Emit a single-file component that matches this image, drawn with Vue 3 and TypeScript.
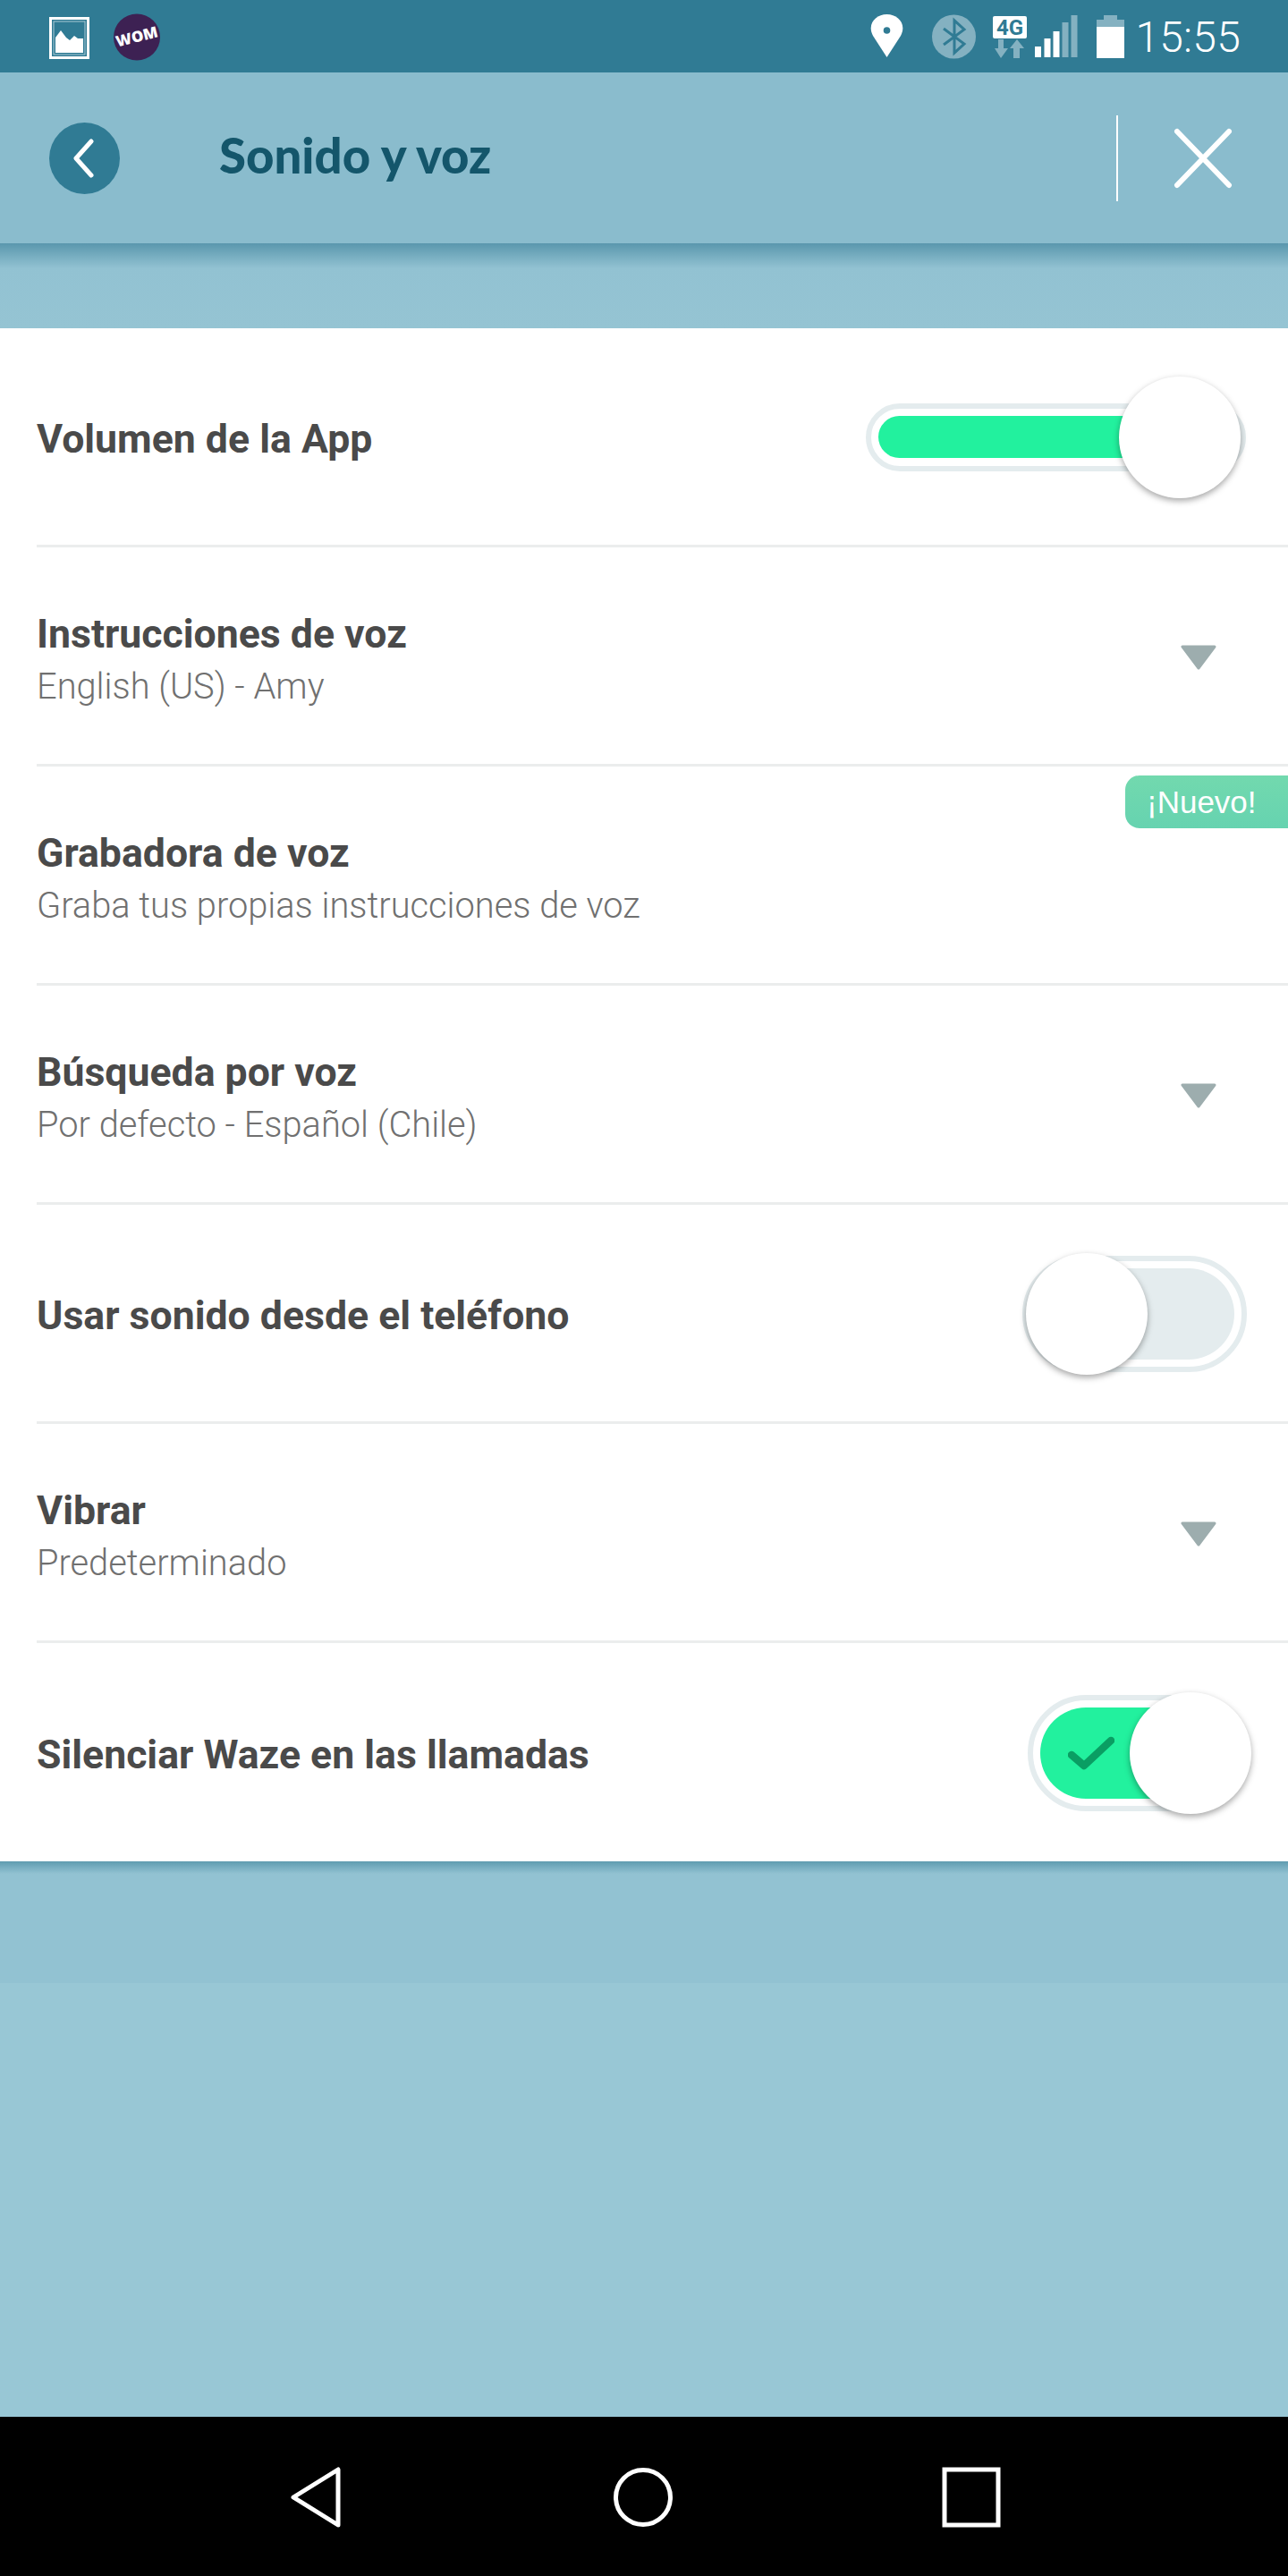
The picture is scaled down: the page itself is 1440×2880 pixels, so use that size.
<script setup lang="ts">
interface SettingRow {
  title: string;
  subtitle?: string;
  control: 'slider' | 'select' | 'badge' | 'toggle-off' | 'toggle-on';
}

const rows: SettingRow[] = [
  { title: 'Volumen de la App', control: 'slider' },
  { title: 'Instrucciones de voz', subtitle: 'English (US) - Amy', control: 'select' },
  { title: 'Grabadora de voz', subtitle: 'Graba tus propias instrucciones de voz', control: 'badge' },
  { title: 'Búsqueda por voz', subtitle: 'Por defecto - Español (Chile)', control: 'select' },
  { title: 'Usar sonido desde el teléfono', control: 'toggle-off' },
  { title: 'Vibrar', subtitle: 'Predeterminado', control: 'select' },
  { title: 'Silenciar Waze en las llamadas', control: 'toggle-on' },
];

const signalBars = [
  { x: 0, y: 35, h: 12, on: true },
  { x: 10.5, y: 26, h: 21, on: true },
  { x: 20.5, y: 18, h: 29, on: true },
  { x: 30.5, y: 8, h: 39, on: false },
  { x: 40.5, y: 0, h: 47, on: false },
];
</script>

<template>
  <div class="screen">
    <div class="status-bar">
      <div class="status-left">
        <svg class="ic-picture" width="45" height="47" viewBox="0 0 45 47">
          <rect x="1.5" y="1.5" width="42" height="44" fill="none" stroke="#fff" stroke-width="3" />
          <rect x="5" y="5" width="35" height="37" fill="none" stroke="#a9cbd6" stroke-width="1" />
          <path d="M7 40V23L13 15L19 23L23 26L28 21L32 24L38 24V40Z" fill="#fff" />
        </svg>
        <svg class="ic-wom" width="52" height="53" viewBox="0 0 52 53">
          <circle cx="26" cy="26.500" r="26" fill="#3d2153" />
          <text x="26" y="32" text-anchor="middle" transform="rotate(-14 26 26)" class="wom-text">WOM</text>
        </svg>
      </div>
      <div class="status-right">
        <svg class="ic-pin" width="37" height="48" viewBox="0 0 37 48">
          <path d="M18.500 48L3 24C-4 11 6 0 18.500 0S41 11 34 24Z" fill="#fff" />
          <circle cx="18.500" cy="18" r="3.800" fill="#307b94" />
        </svg>
        <svg class="ic-bt" width="49" height="50" viewBox="0 0 49 50">
          <circle cx="24.500" cy="25" r="24.500" fill="#84b1c1" />
          <path d="M13 16L36 33L25 43V7L36 17L13 34" fill="none" stroke="#307b94" stroke-width="3" />
        </svg>
        <svg class="ic-net" width="38" height="47" viewBox="0 0 38 47">
          <rect width="38" height="25" rx="2" fill="#fff" />
          <text x="19" y="21" text-anchor="middle" class="net-text">4G</text>
          <path d="M6 26H12V36H17L9 47L2 36H6Z" fill="#84b1c1" />
          <path d="M23 47V36H19L27 26L35 36H30V47Z" fill="#84b1c1" />
        </svg>
        <svg class="ic-signal" width="48" height="47" viewBox="0 0 48 47">
          <rect
            v-for="bar in signalBars"
            :key="bar.x"
            :x="bar.x"
            :y="bar.y"
            width="7"
            :height="bar.h"
            :fill="bar.on ? '#fff' : '#84b1c1'"
          />
        </svg>
        <svg class="ic-battery" width="31" height="48" viewBox="0 0 31 48">
          <path d="M8 0H23V5H31V13H0V5H8Z" fill="#84b1c1" />
          <rect y="13" width="31" height="35" fill="#fff" />
        </svg>
        <span class="clock">15:55</span>
      </div>
    </div>

    <header class="app-header">
      <button class="back-btn" type="button">
        <svg width="24" height="44" viewBox="0 0 24 44">
          <path d="M21 3L4 22L21 41" fill="none" stroke="#fff" stroke-width="5" stroke-linecap="round" stroke-linejoin="round" />
        </svg>
      </button>
      <h1 class="page-title">Sonido y voz</h1>
      <div class="header-sep"></div>
      <button class="close-btn" type="button">
        <svg width="66" height="68" viewBox="0 0 66 68">
          <path d="M4 4L62 64M62 4L4 64" fill="none" stroke="#fff" stroke-width="6" stroke-linecap="round" />
        </svg>
      </button>
    </header>

    <div class="top-gap"></div>

    <section class="settings">
      <div v-for="row in rows" :key="row.title" class="row">
        <div class="row-text" :class="{ 'has-subtitle': row.subtitle }">
          <div class="row-title">{{ row.title }}</div>
          <div v-if="row.subtitle" class="row-subtitle">{{ row.subtitle }}</div>
        </div>

        <div v-if="row.control === 'slider'" class="slider">
          <div class="slider-fill"></div>
          <div class="knob slider-knob"></div>
        </div>

        <svg v-else-if="row.control === 'select'" class="caret" width="40" height="28" viewBox="0 0 40 28">
          <path d="M2 2H38L20 26Z" fill="#9dadae" stroke="#9dadae" stroke-width="3" stroke-linejoin="round" />
        </svg>

        <div v-else-if="row.control === 'badge'" class="badge">¡Nuevo!</div>

        <div v-else-if="row.control === 'toggle-off'" class="toggle toggle-off">
          <div class="toggle-fill"></div>
          <div class="knob toggle-knob"></div>
        </div>

        <div v-else class="toggle toggle-on">
          <div class="toggle-fill">
            <svg width="52" height="42" viewBox="0 0 52 42">
              <path d="M4 23L18 35L48 7" fill="none" stroke="#0a9e63" stroke-width="8.500" stroke-linecap="round" stroke-linejoin="round" />
            </svg>
          </div>
          <div class="knob toggle-knob"></div>
        </div>
      </div>
    </section>

    <div class="bottom-band"></div>
    <div class="filler"></div>

    <nav class="nav-bar">
      <svg width="56" height="68" viewBox="0 0 56 68">
        <path d="M53 3V65L3 34Z" fill="none" stroke="#fff" stroke-width="5" stroke-linejoin="round" />
      </svg>
      <svg class="nav-home" width="66" height="68" viewBox="0 0 66 68">
        <circle cx="33" cy="34" r="30.500" fill="none" stroke="#fff" stroke-width="5" />
      </svg>
      <svg class="nav-recent" width="66" height="68" viewBox="0 0 66 68">
        <rect x="3" y="3" width="60" height="62" fill="none" stroke="#fff" stroke-width="5" />
      </svg>
    </nav>
  </div>
</template>

<style scoped>
.screen {
  width: 1440px;
  height: 2880px;
  display: flex;
  flex-direction: column;
  background: #98c7d5;
  font-family: Roboto, 'Liberation Sans', sans-serif;
  overflow: hidden;
}

.status-bar {
  height: 81px;
  flex: none;
  display: flex;
  justify-content: space-between;
  align-items: flex-start;
  background: #307b94;
  padding: 16px 53px 0 55px;
  box-sizing: border-box;
}

.status-left,
.status-right {
  display: flex;
  align-items: flex-start;
}

.ic-picture {
  margin-top: 3px;
}

.ic-wom {
  margin-left: 27px;
  margin-top: -1px;
}

.wom-text {
  font-family: 'Open Sans', sans-serif;
  font-size: 17px;
  font-weight: 800;
  fill: #fff;
}

.ic-bt {
  margin-left: 32px;
}

.ic-net {
  margin-left: 19px;
  margin-top: 2px;
}

.net-text {
  font-family: Roboto, sans-serif;
  font-size: 24px;
  font-weight: 700;
  fill: #307b94;
}

.ic-signal {
  margin-left: 9px;
  margin-top: 1px;
}

.ic-battery {
  margin-left: 21px;
  margin-top: 1px;
}

.clock {
  margin-left: 12px;
  color: #fff;
  font-size: 48px;
  font-weight: 300;
  line-height: 52px;
  letter-spacing: 0.2px;
}

.app-header {
  height: 191px;
  flex: none;
  display: flex;
  align-items: center;
  background: #8abccd;
  padding: 0 62px 0 55px;
  box-sizing: border-box;
}

.back-btn {
  width: 79px;
  height: 80px;
  flex: none;
  border: none;
  padding: 0 4px 0 0;
  border-radius: 50%;
  background: #307b94;
  display: flex;
  align-items: center;
  justify-content: center;
}

.page-title {
  margin: -8px 0 0 111px;
  flex: 1;
  color: #14566b;
  font-family: Lato, sans-serif;
  font-size: 54.500px;
  font-weight: 900;
}

.header-sep {
  width: 2px;
  height: 96px;
  background: #fff;
}

.close-btn {
  margin-left: 62px;
  padding: 0;
  border: none;
  background: none;
  display: flex;
}

.top-gap {
  height: 95px;
  flex: none;
  background: linear-gradient(#5a97ad 0, #92c2d2 28px, #95c4d3 100%);
}

.settings {
  height: 1714px;
  flex: none;
  background: #fff;
  display: flex;
  flex-direction: column;
}

.row {
  flex: none;
  height: 245px;
  box-sizing: border-box;
  position: relative;
  margin-left: 41px;
  border-bottom: 3px solid #ebeded;
  display: flex;
  align-items: center;
  justify-content: space-between;
  padding-right: 46px;
}

.row:last-child {
  flex: 1;
  height: auto;
  border-bottom: none;
}

.row-text {
  color: #4a4a4a;
  padding-top: 5px;
}

.row-text.has-subtitle {
  padding-top: 9px;
}

.row-title {
  font-size: 44.600px;
  font-weight: 700;
  line-height: 50px;
}

.row-subtitle {
  margin-top: 10px;
  color: #707070;
  font-size: 39.800px;
  font-weight: 300;
  line-height: 48px;
}

.caret {
  margin-top: 3px;
  margin-right: 34px;
}

.knob {
  position: absolute;
  width: 136px;
  height: 136px;
  border-radius: 50%;
  background: #fff;
  box-shadow: 0 3px 7px rgba(0, 0, 0, 0.35);
}

.slider {
  position: absolute;
  left: 927px;
  top: 84px;
  width: 425px;
  height: 76px;
  border: 6px solid #e4ecee;
  border-radius: 38px;
  box-sizing: border-box;
  padding: 8px;
}

.slider-fill {
  height: 47px;
  width: 320px;
  border-radius: 24px;
  background: #22f19e;
}

.slider-knob {
  right: 0;
  top: -36px;
}

.badge {
  position: absolute;
  right: 0;
  top: 10px;
  width: 182px;
  height: 59px;
  box-sizing: border-box;
  padding-left: 24px;
  border-radius: 16px 0 0 16px;
  background: linear-gradient(#72d9ae, #66d3b0);
  color: #fff;
  font-family: 'Liberation Sans', sans-serif;
  font-size: 35px;
  line-height: 59px;
}

.toggle {
  position: absolute;
  top: 50%;
  height: 130px;
  width: 246px;
  margin-top: -64px;
  box-sizing: border-box;
  border: 6px solid #e4ecee;
  border-radius: 65px;
  padding: 8px;
}

.toggle-off {
  left: 1102px;
  width: 251px;
}

.toggle-on {
  left: 1108px;
}

.toggle-fill {
  height: 102px;
  border-radius: 51px;
  display: flex;
  align-items: center;
  padding-left: 31px;
}

.toggle-off .toggle-fill {
  background: #e4ecee;
}

.toggle-on .toggle-fill {
  background: #22f19e;
}

.toggle-off .toggle-knob {
  left: -2px;
  top: -9px;
}

.toggle-on .toggle-knob {
  right: -10px;
  top: -9px;
}

.bottom-band {
  height: 136px;
  flex: none;
  background: linear-gradient(#5f9cb0 0, #92c2d2 14px);
}

.filler {
  flex: 1;
}

.nav-bar {
  height: 178px;
  flex: none;
  background: #000;
  box-sizing: border-box;
  padding: 56px 0 0 325px;
  display: flex;
  align-items: flex-start;
}

.nav-home {
  margin-left: 305px;
}

.nav-recent {
  margin-left: 301px;
}
</style>
